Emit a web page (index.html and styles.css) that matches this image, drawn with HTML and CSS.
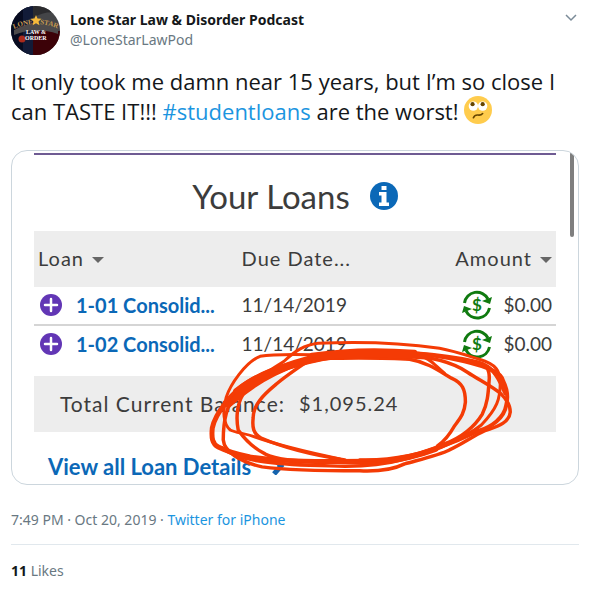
FILE: index.html
```html
<!DOCTYPE html>
<html lang="en">
<head>
<meta charset="utf-8">
<meta name="viewport" content="width=device-width, initial-scale=1">
<title>Lone Star Law &amp; Disorder Podcast</title>
<link rel="stylesheet" href="styles.css">
</head>
<body>
<article class="tweet">
  <header class="author">
    <svg class="avatar" viewBox="0 0 49 49" aria-hidden="true">
      <defs>
        <clipPath id="disc"><circle cx="24.500" cy="24.500" r="24.500"/></clipPath>
        <path id="arc-left" d="M3 23Q11 19 22 18"/>
        <path id="arc-right" d="M29 18Q38 19 48 23"/>
      </defs>
      <g clip-path="url(#disc)">
        <path fill="#444548" d="M0 0h49v49H0z"/>
        <path fill="#070b20" d="M0 0h22v49H0z"/>
        <path fill="#121b38" d="M12 0h10v49H12z"/>
        <path fill="#3c0208" d="M22 25h27v24H22z"/>
        <path fill="#2b2b2e" d="M22 0h27v7Q34 4 22 12z"/>
        <path fill="#4d4a4b" d="M3 24Q24 12 47 23v5Q24 20 3 29z"/>
        <text class="avatar-arc"><textPath href="#arc-left">LONE</textPath></text>
        <text class="avatar-arc"><textPath href="#arc-right">STAR</textPath></text>
        <path fill="#f6b93b" d="m25 9 1.500 3.500 4 .3-3 2.600 1 3.900-3.500-2-3.400 2 .9-3.900-3-2.600 4-.3z"/>
        <circle cx="11" cy="33" r="3.500" fill="#a92a1c"/>
        <text class="avatar-law" x="15" y="28">LAW &amp;</text>
        <text class="avatar-law" x="14" y="34">ORDER</text>
      </g>
    </svg>
    <div class="names">
      <a class="name" href="#">Lone Star Law &amp; Disorder Podcast</a>
      <a class="handle" href="#">@LoneStarLawPod</a>
    </div>
    <button class="more" type="button" aria-label="More">
      <svg viewBox="0 0 12 8" aria-hidden="true"><path d="m1 1 5 5 5-5" fill="none" stroke="#7b8b98" stroke-width="1.500"/></svg>
    </button>
  </header>

  <p class="message">It only took me damn near 15 years, but I’m so close I can TASTE IT!!! <a href="#">#studentloans</a> are the worst!
    <svg class="emoji" viewBox="0 0 36 36" role="img" aria-label="Face with rolling eyes">
      <circle cx="18" cy="18" r="18" fill="#ffcc4d"/>
      <circle cx="12" cy="13" r="6" fill="#fff"/><circle cx="24" cy="13" r="6" fill="#fff"/>
      <circle cx="11" cy="10.500" r="2.700" fill="#664500"/><circle cx="24" cy="10.500" r="2.700" fill="#664500"/>
      <path d="M12 28q2-4 6-3.500t6-2" fill="none" stroke="#664500" stroke-width="2" stroke-linecap="round"/>
    </svg>
  </p>

  <section class="photo">
    <div class="loans">
      <h2 class="title">Your Loans
        <svg viewBox="0 0 28 28" aria-hidden="true"><circle cx="14" cy="14" r="14" fill="#0b68b7"/><path fill="#fff" d="M11.500 4h5v4h-5zM9 10h7.500v10.500H19V24H9v-3.500h2.500v-7H9z"/></svg>
      </h2>
      <table>
        <thead>
          <tr><th class="col-loan">Loan<i class="caret"></i></th><th class="col-date">Due Date...</th><th class="col-amount">Amount<i class="caret"></i></th></tr>
        </thead>
        <tbody>
          <tr>
            <td><div class="loan"><svg viewBox="0 0 22 22" aria-hidden="true"><circle cx="11" cy="11" r="11" fill="#6236b5"/><path d="M11 5v12M5 11h12" stroke="#fff" stroke-width="2.500" stroke-linecap="round"/></svg><a href="#">1-01 Consolid...</a></div></td>
            <td>11/14/2019</td>
            <td><div class="amount"><svg viewBox="0 0 30 30" aria-hidden="true"><g fill="none" stroke="#107a10" stroke-width="3"><path d="M2.500 13A12.500 12.500 0 0 1 26 9M27.500 18A12.500 12.500 0 0 1 4 21"/></g><path fill="#107a10" d="m30 7-2 7-8-3zM0 23l2-7 8 3z"/><text class="dollar" x="15" y="21">$</text></svg><span>$0.00</span></div></td>
          </tr>
          <tr>
            <td><div class="loan"><svg viewBox="0 0 22 22" aria-hidden="true"><circle cx="11" cy="11" r="11" fill="#6236b5"/><path d="M11 5v12M5 11h12" stroke="#fff" stroke-width="2.500" stroke-linecap="round"/></svg><a href="#">1-02 Consolid...</a></div></td>
            <td>11/14/2019</td>
            <td><div class="amount"><svg viewBox="0 0 30 30" aria-hidden="true"><g fill="none" stroke="#107a10" stroke-width="3"><path d="M2.500 13A12.500 12.500 0 0 1 26 9M27.500 18A12.500 12.500 0 0 1 4 21"/></g><path fill="#107a10" d="m30 7-2 7-8-3zM0 23l2-7 8 3z"/><text class="dollar" x="15" y="21">$</text></svg><span>$0.00</span></div></td>
          </tr>
        </tbody>
      </table>
      <div class="total"><span>Total Current Balance:</span><span>$1,095.24</span></div>
      <a class="details" href="#">View all Loan Details
        <svg viewBox="0 0 14 18" aria-hidden="true"><path d="m3 1 7 8-7 8" fill="none" stroke="#1463ad" stroke-width="5"/></svg>
      </a>
    </div>
    <span class="scrollbar"></span>
    <svg class="scribble" viewBox="11 150 568 335" aria-hidden="true">
      <g fill="none" stroke="#f43b05" stroke-width="3.500" stroke-linecap="round" stroke-linejoin="round">
        <path stroke-width="3" d="M224 402C240 388 264 374 284 361C296 350 304 345 318 343C360 341 405 343 440 348C456 351 470 356 480 359C497 364 501 371 501 382C501 399 498 408 482 425C471 434 456 441 440 446"/>
        <path stroke-width="3" d="M330 355C300 354 272 354 260 356C245 362 230 385 226 397C222 411 223 424 230 430C236 433 244 433 255 437C272 443 306 452 340 459"/>
        <path stroke-width="5" d="M345 354C300 360 270 368 248 382C232 392 215 413 212 428C211 438 212 444 218 447C228 452 240 455 250 457C280 462 320 462 380 461"/>
        <path d="M345 356C290 362 254 380 235 396C224 408 223 427 223 440C224 452 240 462 262 467C285 470 320 471 360 471C382 472 397 468 405 464C423 459 440 455 450 450C463 444 474 436 485 431C495 427 510 424 511 412C511 404 507 399 502 394C493 386 480 380 468 372C452 361 430 356 400 354"/>
        <path d="M335 357C290 362 254 380 243 394C236 405 236 420 238 430C245 440 255 449 265 454C280 462 320 463 370 461"/>
        <path d="M312 358C302 365 285 376 275 385C263 395 253 405 253 418C252 427 253 434 261 438C284 448 312 455 345 460"/>
        <path d="M315 358C350 358 382 357 410 359C428 362 440 371 452 378C463 383 466 389 466 402C465 414 460 419 455 426C450 435 445 441 438 446"/>
        <path stroke-width="3" d="M421 356C431 358 436 366 445 373"/>
        <path stroke-width="4" d="M330 355C365 348 424 351 465 361C485 366 502 371 504 381C508 389 509 397 507 405C505 418 492 427 479 431C456 442 428 453 400 459C376 464 350 462 320 462"/>
        <path d="M340 352C390 349 445 354 475 361C488 363 490 370 490 378C489 390 489 402 483 414C475 427 463 437 445 444C427 453 395 461 360 460"/>
        <path stroke-width="5" d="M318 357C350 355 390 354 430 357M312 355C350 349 390 350 415 352"/>
        <path stroke-width="6" d="M236 391C256 375 284 365 310 358M228 405C248 386 270 373 300 362M436 449C420 455 400 460 380 462"/>
        <path d="M222 448C238 462 282 465 330 466C356 467 384 465 402 460C427 454 455 443 478 429"/>
        <path stroke-width="4" d="M484 364C495 369 500 379 506 393"/>
      </g>
    </svg>
  </section>

  <p class="meta">7:49 PM · Oct 20, 2019 · <a href="#">Twitter for iPhone</a></p>
  <p class="likes"><strong>11</strong> Likes</p>
</article>
</body>
</html>
```
FILE: styles.css
```css
* { box-sizing: border-box; }
body { margin: 0; background: #fff; color: #14171a; font-family: "Noto Sans", "Open Sans", sans-serif; }
a { color: #1b95e0; text-decoration: none; }
p, h2 { margin: 0; }
svg { display: block; flex: none; }

.tweet { padding: 6px 11px 0; }
.author { display: flex; align-items: flex-start; gap: 10px; }
.avatar { width: 49px; height: 49px; }
.avatar-arc { font: bold 7px "Liberation Serif", serif; fill: #c99b50; }
.avatar-law { font: bold 6px "Liberation Serif", serif; fill: #fff; }
.names { display: flex; flex: 1; flex-direction: column; padding-top: 4px; line-height: 20px; }
.name { color: #14171a; font-size: 14px; font-weight: 700; }
.handle { color: #697882; font-size: 14px; }
.more { padding: 8px 2px; border: 0; background: none; }
.more svg { width: 12px; height: 8px; }

.message { margin-top: 11px; font-family: "Open Sans", sans-serif; font-size: 22px; line-height: 30px; }
.emoji { display: inline-block; width: 28px; height: 28px; vertical-align: -4px; }

.photo { position: relative; margin-top: 24px; overflow: hidden; border: 1px solid #ccd6dd; border-radius: 16px; font-family: Lato, sans-serif; color: #3c3c3c; }
.loans { margin: 2px 22px 0; border-top: 2px solid #6f5b93; }
.title { display: flex; align-items: center; justify-content: center; gap: 20px; height: 76px; padding-top: 5px; font-size: 33px; font-weight: 400; }
.title svg { width: 28px; height: 28px; }
table { width: 100%; border-collapse: collapse; table-layout: fixed; font-size: 19px; }
th { height: 56px; padding: 0 4px 2px; background: #ededed; font-size: 20px; font-weight: 400; letter-spacing: 1px; text-align: left; }
.col-loan, .col-date { width: 39%; }
.col-amount { width: 22%; }
th.col-amount { text-align: right; }
td { height: 38px; padding: 0 4px 2px; border-bottom: 2px solid #d5d5d5; }
tbody tr:last-child td { border-bottom: 0; }
.caret { display: inline-block; margin-left: 8px; border: 6px solid transparent; border-top-color: #666; border-bottom: 0; vertical-align: 3px; }
.loan { display: flex; align-items: center; gap: 14px; padding-left: 2px; }
.loan svg { width: 22px; height: 22px; }
.loan a, .details { color: #0b68b7; font-size: 20px; font-weight: 700; }
.amount { display: flex; align-items: center; justify-content: flex-end; gap: 11px; }
.amount svg { width: 30px; height: 30px; }
.dollar { fill: #107a10; font-size: 17px; font-weight: 700; text-anchor: middle; }
.total { display: flex; align-items: center; gap: 14px; height: 56px; margin-top: 13px; padding: 0 0 2px 26px; background: #ededed; font-size: 21px; letter-spacing: 1px; }
.total span + span { font-size: 20px; }
.loans .details { display: flex; align-items: center; gap: 20px; height: 52px; padding: 16px 0 0 14px; font-size: 22px; }
.details svg { width: 14px; height: 18px; }
.scrollbar { position: absolute; top: 1px; right: 4px; width: 4px; height: 85px; border-radius: 2px; background: #7f7f7f; }
.scribble { position: absolute; top: 0; left: 0; width: 100%; }

.meta { padding: 25px 0 14px; border-bottom: 1px solid #e1e8ed; color: #697882; font-size: 14px; line-height: 20px; }
.likes { padding: 16px 0 8px; color: #697882; font-size: 14px; line-height: 20px; }
.likes strong { color: #14171a; }
```
